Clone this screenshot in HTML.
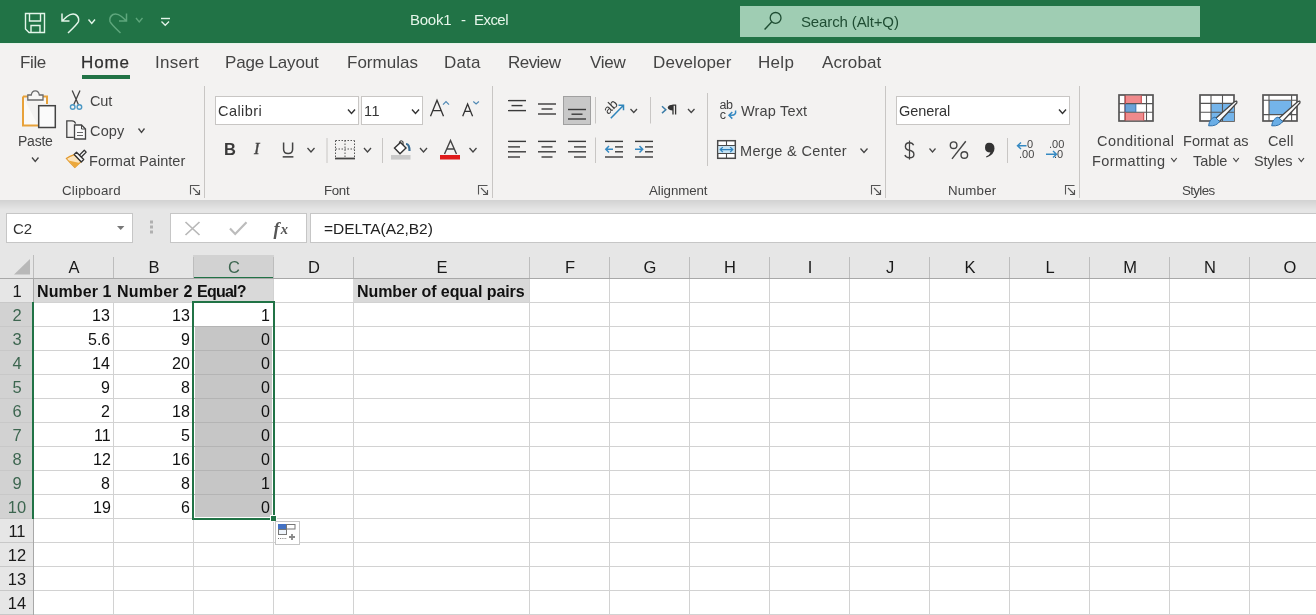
<!DOCTYPE html><html><head><meta charset="utf-8"><style>
*{box-sizing:border-box}
body{margin:0;width:1316px;height:615px;overflow:hidden;position:relative;background:#fff;font-family:"Liberation Sans",sans-serif;}
.a{position:absolute}
.t{position:absolute;white-space:nowrap;line-height:1;will-change:transform}
svg{position:absolute;overflow:visible;will-change:transform}
</style></head><body>
<div class="a" style="left:0px;top:0px;width:1316px;height:43px;background:#217346;"></div>
<div class="a" style="left:740px;top:6px;width:460px;height:31px;background:#9fcdb3;"></div>
<div class="t" style="left:410.15px;top:12.00px;font-size:15px;color:#e6f6ea;letter-spacing:-0.256px;">Book1</div>
<div class="t" style="left:461.38px;top:12.00px;font-size:15px;color:#e6f6ea;letter-spacing:0.000px;">-</div>
<div class="t" style="left:474.45px;top:12.00px;font-size:15px;color:#e6f6ea;letter-spacing:-0.550px;">Excel</div>
<div class="t" style="left:801.08px;top:14.00px;font-size:15px;color:#1f4d33;letter-spacing:-0.133px;">Search (Alt+Q)</div>
<div class="a" style="left:0px;top:43px;width:1316px;height:157px;background:#f3f2f1;"></div>
<div class="a" style="left:0px;top:43px;width:1316px;height:1px;background:#e6f3ea;"></div>
<div class="t" style="left:20.02px;top:54.00px;font-size:17px;color:#444;letter-spacing:-0.358px;">File</div>
<div class="t" style="left:81.22px;top:54.00px;font-size:17px;color:#303030;letter-spacing:0.883px;-webkit-text-stroke:0.25px #303030;">Home</div>
<div class="t" style="left:154.70px;top:54.00px;font-size:17px;color:#444;letter-spacing:0.265px;">Insert</div>
<div class="t" style="left:225.43px;top:54.00px;font-size:17px;color:#444;letter-spacing:-0.180px;">Page Layout</div>
<div class="t" style="left:346.62px;top:54.00px;font-size:17px;color:#444;letter-spacing:0.018px;">Formulas</div>
<div class="t" style="left:443.93px;top:54.00px;font-size:17px;color:#444;letter-spacing:0.158px;">Data</div>
<div class="t" style="left:507.82px;top:54.00px;font-size:17px;color:#444;letter-spacing:-0.540px;">Review</div>
<div class="t" style="left:589.88px;top:54.00px;font-size:17px;color:#444;letter-spacing:-0.267px;">View</div>
<div class="t" style="left:652.62px;top:54.00px;font-size:17px;color:#444;letter-spacing:0.103px;">Developer</div>
<div class="t" style="left:758.12px;top:54.00px;font-size:17px;color:#444;letter-spacing:0.308px;">Help</div>
<div class="t" style="left:822.40px;top:54.00px;font-size:17px;color:#444;letter-spacing:0.117px;">Acrobat</div>
<div class="a" style="left:82px;top:75px;width:48px;height:4px;background:#217346;"></div>
<div class="a" style="left:204px;top:86px;width:1px;height:112px;background:#c8c6c4;"></div>
<div class="a" style="left:492px;top:86px;width:1px;height:112px;background:#c8c6c4;"></div>
<div class="a" style="left:885px;top:86px;width:1px;height:112px;background:#c8c6c4;"></div>
<div class="a" style="left:1079px;top:86px;width:1px;height:112px;background:#c8c6c4;"></div>
<div class="t" style="left:62.00px;top:184.00px;font-size:13.3px;color:#444;letter-spacing:0.206px;">Clipboard</div>
<div class="t" style="left:324.30px;top:184.00px;font-size:13.3px;color:#444;letter-spacing:-0.325px;">Font</div>
<div class="t" style="left:649.02px;top:184.00px;font-size:13.3px;color:#444;letter-spacing:-0.072px;">Alignment</div>
<div class="t" style="left:947.60px;top:184.00px;font-size:13.3px;color:#444;letter-spacing:0.165px;">Number</div>
<div class="t" style="left:1181.60px;top:184.00px;font-size:13.3px;color:#444;letter-spacing:-0.620px;">Styles</div>
<div class="a" style="left:0px;top:200px;width:1316px;height:55px;background:#e6e6e6;"></div>
<div class="a" style="left:0px;top:200px;width:1316px;height:10px;background:linear-gradient(#d2d2d2,#e6e6e6);"></div>
<div class="a" style="left:6px;top:213px;width:127px;height:30px;background:#fff;border:1px solid #c6c6c6"></div>
<div class="t" style="left:13.05px;top:221.00px;font-size:15px;color:#333;letter-spacing:-0.150px;">C2</div>
<div class="a" style="left:170px;top:213px;width:137px;height:30px;background:#fff;border:1px solid #c6c6c6"></div>
<div class="a" style="left:310px;top:213px;width:1010px;height:30px;background:#fff;border:1px solid #c6c6c6"></div>
<div class="t" style="left:323.75px;top:221.00px;font-size:15.5px;color:#222;letter-spacing:-0.035px;">=DELTA(A2,B2)</div>
<div class="a" style="left:0px;top:255px;width:1316px;height:23px;background:#e6e6e6;"></div>
<div class="a" style="left:0px;top:255px;width:33px;height:360px;background:#e6e6e6;"></div>
<div class="a" style="left:193px;top:255px;width:81px;height:23px;background:#d2d2d2;"></div>
<div class="a" style="left:193px;top:277px;width:81px;height:2px;background:#217346;"></div>
<div class="a" style="left:0px;top:303px;width:32px;height:216px;background:#d2d2d2;"></div>
<div class="a" style="left:33px;top:279px;width:240px;height:23px;background:#d9d9d9;"></div>
<div class="a" style="left:353px;top:279px;width:176px;height:23px;background:#d9d9d9;"></div>
<div class="a" style="left:195px;top:327px;width:77px;height:190px;background:#c6c6c6;"></div>
<div class="a" style="left:33px;top:302px;width:1283px;height:1px;background:#d2d2d2"></div>
<div class="a" style="left:33px;top:326px;width:1283px;height:1px;background:#d2d2d2"></div>
<div class="a" style="left:33px;top:350px;width:1283px;height:1px;background:#d2d2d2"></div>
<div class="a" style="left:33px;top:374px;width:1283px;height:1px;background:#d2d2d2"></div>
<div class="a" style="left:33px;top:398px;width:1283px;height:1px;background:#d2d2d2"></div>
<div class="a" style="left:33px;top:422px;width:1283px;height:1px;background:#d2d2d2"></div>
<div class="a" style="left:33px;top:446px;width:1283px;height:1px;background:#d2d2d2"></div>
<div class="a" style="left:33px;top:470px;width:1283px;height:1px;background:#d2d2d2"></div>
<div class="a" style="left:33px;top:494px;width:1283px;height:1px;background:#d2d2d2"></div>
<div class="a" style="left:33px;top:518px;width:1283px;height:1px;background:#d2d2d2"></div>
<div class="a" style="left:33px;top:542px;width:1283px;height:1px;background:#d2d2d2"></div>
<div class="a" style="left:33px;top:566px;width:1283px;height:1px;background:#d2d2d2"></div>
<div class="a" style="left:33px;top:590px;width:1283px;height:1px;background:#d2d2d2"></div>
<div class="a" style="left:33px;top:614px;width:1283px;height:1px;background:#d2d2d2"></div>
<div class="a" style="left:113px;top:302px;width:1px;height:340px;background:#d2d2d2;"></div>
<div class="a" style="left:113px;top:257px;width:1px;height:21px;background:#bdbdbd;"></div>
<div class="t" style="left:-26.50px;width:200px;text-align:center;top:259.00px;font-size:16.5px;color:#1a1a1a;">A</div>
<div class="a" style="left:193px;top:302px;width:1px;height:340px;background:#d2d2d2;"></div>
<div class="a" style="left:193px;top:257px;width:1px;height:21px;background:#bdbdbd;"></div>
<div class="t" style="left:53.50px;width:200px;text-align:center;top:259.00px;font-size:16.5px;color:#1a1a1a;">B</div>
<div class="a" style="left:273px;top:279px;width:1px;height:340px;background:#d2d2d2;"></div>
<div class="a" style="left:273px;top:257px;width:1px;height:21px;background:#bdbdbd;"></div>
<div class="t" style="left:133.50px;width:200px;text-align:center;top:259.00px;font-size:16.5px;color:#3d6650;">C</div>
<div class="a" style="left:353px;top:302px;width:1px;height:340px;background:#d2d2d2;"></div>
<div class="a" style="left:353px;top:257px;width:1px;height:21px;background:#bdbdbd;"></div>
<div class="t" style="left:213.50px;width:200px;text-align:center;top:259.00px;font-size:16.5px;color:#1a1a1a;">D</div>
<div class="a" style="left:529px;top:279px;width:1px;height:340px;background:#d2d2d2;"></div>
<div class="a" style="left:529px;top:257px;width:1px;height:21px;background:#bdbdbd;"></div>
<div class="t" style="left:341.50px;width:200px;text-align:center;top:259.00px;font-size:16.5px;color:#1a1a1a;">E</div>
<div class="a" style="left:609px;top:279px;width:1px;height:340px;background:#d2d2d2;"></div>
<div class="a" style="left:609px;top:257px;width:1px;height:21px;background:#bdbdbd;"></div>
<div class="t" style="left:469.50px;width:200px;text-align:center;top:259.00px;font-size:16.5px;color:#1a1a1a;">F</div>
<div class="a" style="left:689px;top:279px;width:1px;height:340px;background:#d2d2d2;"></div>
<div class="a" style="left:689px;top:257px;width:1px;height:21px;background:#bdbdbd;"></div>
<div class="t" style="left:549.50px;width:200px;text-align:center;top:259.00px;font-size:16.5px;color:#1a1a1a;">G</div>
<div class="a" style="left:769px;top:279px;width:1px;height:340px;background:#d2d2d2;"></div>
<div class="a" style="left:769px;top:257px;width:1px;height:21px;background:#bdbdbd;"></div>
<div class="t" style="left:629.50px;width:200px;text-align:center;top:259.00px;font-size:16.5px;color:#1a1a1a;">H</div>
<div class="a" style="left:849px;top:279px;width:1px;height:340px;background:#d2d2d2;"></div>
<div class="a" style="left:849px;top:257px;width:1px;height:21px;background:#bdbdbd;"></div>
<div class="t" style="left:709.50px;width:200px;text-align:center;top:259.00px;font-size:16.5px;color:#1a1a1a;">I</div>
<div class="a" style="left:929px;top:279px;width:1px;height:340px;background:#d2d2d2;"></div>
<div class="a" style="left:929px;top:257px;width:1px;height:21px;background:#bdbdbd;"></div>
<div class="t" style="left:789.50px;width:200px;text-align:center;top:259.00px;font-size:16.5px;color:#1a1a1a;">J</div>
<div class="a" style="left:1009px;top:279px;width:1px;height:340px;background:#d2d2d2;"></div>
<div class="a" style="left:1009px;top:257px;width:1px;height:21px;background:#bdbdbd;"></div>
<div class="t" style="left:869.50px;width:200px;text-align:center;top:259.00px;font-size:16.5px;color:#1a1a1a;">K</div>
<div class="a" style="left:1089px;top:279px;width:1px;height:340px;background:#d2d2d2;"></div>
<div class="a" style="left:1089px;top:257px;width:1px;height:21px;background:#bdbdbd;"></div>
<div class="t" style="left:949.50px;width:200px;text-align:center;top:259.00px;font-size:16.5px;color:#1a1a1a;">L</div>
<div class="a" style="left:1169px;top:279px;width:1px;height:340px;background:#d2d2d2;"></div>
<div class="a" style="left:1169px;top:257px;width:1px;height:21px;background:#bdbdbd;"></div>
<div class="t" style="left:1029.50px;width:200px;text-align:center;top:259.00px;font-size:16.5px;color:#1a1a1a;">M</div>
<div class="a" style="left:1249px;top:279px;width:1px;height:340px;background:#d2d2d2;"></div>
<div class="a" style="left:1249px;top:257px;width:1px;height:21px;background:#bdbdbd;"></div>
<div class="t" style="left:1109.50px;width:200px;text-align:center;top:259.00px;font-size:16.5px;color:#1a1a1a;">N</div>
<div class="a" style="left:1329px;top:279px;width:1px;height:340px;background:#d2d2d2;"></div>
<div class="a" style="left:1329px;top:257px;width:1px;height:21px;background:#bdbdbd;"></div>
<div class="t" style="left:1189.50px;width:200px;text-align:center;top:259.00px;font-size:16.5px;color:#1a1a1a;">O</div>
<div class="a" style="left:33px;top:255px;width:1px;height:23px;background:#bdbdbd;"></div>
<div class="a" style="left:0px;top:278px;width:1316px;height:1px;background:#a8a8a8;"></div>
<div class="a" style="left:33px;top:278px;width:1px;height:340px;background:#a8a8a8;"></div>
<div class="a" style="left:0px;top:302px;width:33px;height:1px;background:#c8c8c8;"></div>
<div class="t" style="left:-83.00px;width:200px;text-align:center;top:283.00px;font-size:16.5px;color:#1a1a1a;">1</div>
<div class="a" style="left:0px;top:326px;width:33px;height:1px;background:#c8c8c8;"></div>
<div class="t" style="left:-83.00px;width:200px;text-align:center;top:307.00px;font-size:16.5px;color:#3d6650;">2</div>
<div class="a" style="left:0px;top:350px;width:33px;height:1px;background:#c8c8c8;"></div>
<div class="t" style="left:-83.00px;width:200px;text-align:center;top:331.00px;font-size:16.5px;color:#3d6650;">3</div>
<div class="a" style="left:0px;top:374px;width:33px;height:1px;background:#c8c8c8;"></div>
<div class="t" style="left:-83.00px;width:200px;text-align:center;top:355.00px;font-size:16.5px;color:#3d6650;">4</div>
<div class="a" style="left:0px;top:398px;width:33px;height:1px;background:#c8c8c8;"></div>
<div class="t" style="left:-83.00px;width:200px;text-align:center;top:379.00px;font-size:16.5px;color:#3d6650;">5</div>
<div class="a" style="left:0px;top:422px;width:33px;height:1px;background:#c8c8c8;"></div>
<div class="t" style="left:-83.00px;width:200px;text-align:center;top:403.00px;font-size:16.5px;color:#3d6650;">6</div>
<div class="a" style="left:0px;top:446px;width:33px;height:1px;background:#c8c8c8;"></div>
<div class="t" style="left:-83.00px;width:200px;text-align:center;top:427.00px;font-size:16.5px;color:#3d6650;">7</div>
<div class="a" style="left:0px;top:470px;width:33px;height:1px;background:#c8c8c8;"></div>
<div class="t" style="left:-83.00px;width:200px;text-align:center;top:451.00px;font-size:16.5px;color:#3d6650;">8</div>
<div class="a" style="left:0px;top:494px;width:33px;height:1px;background:#c8c8c8;"></div>
<div class="t" style="left:-83.00px;width:200px;text-align:center;top:475.00px;font-size:16.5px;color:#3d6650;">9</div>
<div class="a" style="left:0px;top:518px;width:33px;height:1px;background:#c8c8c8;"></div>
<div class="t" style="left:-83.00px;width:200px;text-align:center;top:499.00px;font-size:16.5px;color:#3d6650;">10</div>
<div class="a" style="left:0px;top:542px;width:33px;height:1px;background:#c8c8c8;"></div>
<div class="t" style="left:-83.00px;width:200px;text-align:center;top:523.00px;font-size:16.5px;color:#1a1a1a;">11</div>
<div class="a" style="left:0px;top:566px;width:33px;height:1px;background:#c8c8c8;"></div>
<div class="t" style="left:-83.00px;width:200px;text-align:center;top:547.00px;font-size:16.5px;color:#1a1a1a;">12</div>
<div class="a" style="left:0px;top:590px;width:33px;height:1px;background:#c8c8c8;"></div>
<div class="t" style="left:-83.00px;width:200px;text-align:center;top:571.00px;font-size:16.5px;color:#1a1a1a;">13</div>
<div class="a" style="left:0px;top:614px;width:33px;height:1px;background:#c8c8c8;"></div>
<div class="t" style="left:-83.00px;width:200px;text-align:center;top:595.00px;font-size:16.5px;color:#1a1a1a;">14</div>
<div class="a" style="left:32px;top:302px;width:2px;height:217px;background:#217346;"></div>
<svg style="left:0;top:255px" width="33" height="23"><path d="M30 4 L30 19.5 L14 19.5 Z" fill="#b8b8b8"/></svg>
<div class="t" style="left:36.75px;top:284.00px;font-size:16px;color:#111;font-weight:bold;letter-spacing:0.082px;">Number 1</div>
<div class="t" style="left:116.90px;top:284.00px;font-size:16px;color:#111;font-weight:bold;letter-spacing:0.211px;">Number 2</div>
<div class="t" style="left:196.80px;top:284.00px;font-size:16px;color:#111;font-weight:bold;letter-spacing:-0.780px;">Equal?</div>
<div class="t" style="left:357.00px;top:284.00px;font-size:16px;color:#111;font-weight:bold;letter-spacing:-0.062px;">Number of equal pairs</div>
<div class="t" style="left:92.38px;top:308.00px;font-size:16px;color:#111;letter-spacing:0.000px;">13</div>
<div class="t" style="left:172.38px;top:308.00px;font-size:16px;color:#111;letter-spacing:0.000px;">13</div>
<div class="t" style="left:261.38px;top:308.00px;font-size:16px;color:#111;letter-spacing:0.000px;">1</div>
<div class="t" style="left:87.88px;top:332.00px;font-size:16px;color:#111;letter-spacing:0.000px;">5.6</div>
<div class="t" style="left:181.38px;top:332.00px;font-size:16px;color:#111;letter-spacing:0.000px;">9</div>
<div class="t" style="left:261.25px;top:332.00px;font-size:16px;color:#111;letter-spacing:0.000px;">0</div>
<div class="t" style="left:92.12px;top:356.00px;font-size:16px;color:#111;letter-spacing:0.000px;">14</div>
<div class="t" style="left:172.38px;top:356.00px;font-size:16px;color:#111;letter-spacing:0.000px;">20</div>
<div class="t" style="left:261.25px;top:356.00px;font-size:16px;color:#111;letter-spacing:0.000px;">0</div>
<div class="t" style="left:101.38px;top:380.00px;font-size:16px;color:#111;letter-spacing:0.000px;">9</div>
<div class="t" style="left:181.25px;top:380.00px;font-size:16px;color:#111;letter-spacing:0.000px;">8</div>
<div class="t" style="left:261.25px;top:380.00px;font-size:16px;color:#111;letter-spacing:0.000px;">0</div>
<div class="t" style="left:101.38px;top:404.00px;font-size:16px;color:#111;letter-spacing:0.000px;">2</div>
<div class="t" style="left:172.38px;top:404.00px;font-size:16px;color:#111;letter-spacing:0.000px;">18</div>
<div class="t" style="left:261.25px;top:404.00px;font-size:16px;color:#111;letter-spacing:0.000px;">0</div>
<div class="t" style="left:93.62px;top:428.00px;font-size:16px;color:#111;letter-spacing:0.000px;">11</div>
<div class="t" style="left:181.25px;top:428.00px;font-size:16px;color:#111;letter-spacing:0.000px;">5</div>
<div class="t" style="left:261.25px;top:428.00px;font-size:16px;color:#111;letter-spacing:0.000px;">0</div>
<div class="t" style="left:92.50px;top:452.00px;font-size:16px;color:#111;letter-spacing:0.000px;">12</div>
<div class="t" style="left:172.38px;top:452.00px;font-size:16px;color:#111;letter-spacing:0.000px;">16</div>
<div class="t" style="left:261.25px;top:452.00px;font-size:16px;color:#111;letter-spacing:0.000px;">0</div>
<div class="t" style="left:101.25px;top:476.00px;font-size:16px;color:#111;letter-spacing:0.000px;">8</div>
<div class="t" style="left:181.25px;top:476.00px;font-size:16px;color:#111;letter-spacing:0.000px;">8</div>
<div class="t" style="left:261.38px;top:476.00px;font-size:16px;color:#111;letter-spacing:0.000px;">1</div>
<div class="t" style="left:92.50px;top:500.00px;font-size:16px;color:#111;letter-spacing:0.000px;">19</div>
<div class="t" style="left:181.25px;top:500.00px;font-size:16px;color:#111;letter-spacing:0.000px;">6</div>
<div class="t" style="left:261.25px;top:500.00px;font-size:16px;color:#111;letter-spacing:0.000px;">0</div>
<div class="a" style="left:194px;top:326px;width:79px;height:1px;background:#b4b4b4;"></div>
<div class="a" style="left:194px;top:350px;width:79px;height:1px;background:#b4b4b4;"></div>
<div class="a" style="left:194px;top:374px;width:79px;height:1px;background:#b4b4b4;"></div>
<div class="a" style="left:194px;top:398px;width:79px;height:1px;background:#b4b4b4;"></div>
<div class="a" style="left:194px;top:422px;width:79px;height:1px;background:#b4b4b4;"></div>
<div class="a" style="left:194px;top:446px;width:79px;height:1px;background:#b4b4b4;"></div>
<div class="a" style="left:194px;top:470px;width:79px;height:1px;background:#b4b4b4;"></div>
<div class="a" style="left:194px;top:494px;width:79px;height:1px;background:#b4b4b4;"></div>
<div class="a" style="left:192px;top:301px;width:83px;height:2px;background:#217346;"></div>
<div class="a" style="left:192px;top:518px;width:83px;height:2px;background:#217346;"></div>
<div class="a" style="left:192px;top:301px;width:2px;height:219px;background:#217346;"></div>
<div class="a" style="left:273px;top:301px;width:2px;height:219px;background:#217346;"></div>
<div class="a" style="left:270px;top:515px;width:7px;height:7px;background:#fff;"></div>
<div class="a" style="left:271px;top:516px;width:5px;height:5px;background:#217346;"></div>
<svg style="left:0;top:0" width="1316" height="260"><path d="M25.5 13.5 H44.5 V32.5 H29 L25.5 29 Z" fill="none" stroke="#e3f5e9" stroke-width="1.4"/><path d="M29.5 13.5 V21 H40.5 V13.5" fill="none" stroke="#e3f5e9" stroke-width="1.4"/><path d="M31 32.5 V25.5 H40 V32.5" fill="none" stroke="#e3f5e9" stroke-width="1.4"/><path d="M62 13.5 V21 H69.5 M62 21 L67 16.5 Q71.5 13 75.5 14.5 Q79.5 17 78.5 21.5 Q77.5 24 68 33" fill="none" stroke="#e3f5e9" stroke-width="1.5"/><path d="M88.5 19.5 L91.75 23.5 L95.0 19.5" fill="none" stroke="#e3f5e9" stroke-width="1.4"/><path d="M126.5 13.5 V21 H119 M126.5 21 L121.5 16.5 Q117 13 113 14.5 Q109 17 110 21.5 Q111 24 120.5 33" fill="none" stroke="#5ea67c" stroke-width="1.5"/><path d="M136 18 L139.25 22 L142.5 18" fill="none" stroke="#5ea67c" stroke-width="1.3"/><path d="M161 18.5 H170" stroke="#e3f5e9" stroke-width="1.4"/><path d="M161.5 21.5 L165.25 25.3 L169.0 21.5" fill="none" stroke="#e3f5e9" stroke-width="1.3"/><circle cx="775.6" cy="17.9" r="5.4" fill="none" stroke="#1f4d33" stroke-width="1.3"/><path d="M771.6 21.9 L764.6 29.4" stroke="#1f4d33" stroke-width="1.4"/><path d="M23 96.5 H47 V104 M38 125.5 H23 V96.5" fill="#fbfaf8" stroke="#e8a23a" stroke-width="2"/><path d="M27.8 100 V95 H31.3 Q31.8 90.8 35.3 90.8 Q38.8 90.8 39.3 95 H43 V100 Z" fill="#f7f6f4" stroke="#6a6a6a" stroke-width="1.3"/><rect x="38.7" y="105.7" width="16.6" height="21.8" fill="#fafafa" stroke="#444" stroke-width="1.5"/><path d="M32 157.5 L35.25 161.5 L38.5 157.5" fill="none" stroke="#444" stroke-width="1.3"/><path d="M72.2 90.5 L78.5 104.8 M80 90.5 L73.7 104.8" stroke="#444" stroke-width="1.3" fill="none"/><circle cx="72.7" cy="107" r="2.3" fill="none" stroke="#4b98c4" stroke-width="1.4"/><circle cx="79.4" cy="107" r="2.3" fill="none" stroke="#4b98c4" stroke-width="1.4"/><path d="M73.8 137.3 H66.8 V120.8 H72 Q74.6 120.8 75.6 123.6" fill="none" stroke="#444" stroke-width="1.3"/><path d="M74.5 125 H81.5 L85.5 129 V139 H74.5 Z" fill="#fafafa" stroke="#444" stroke-width="1.3"/><path d="M81.5 125 V129 H85.5" fill="none" stroke="#444" stroke-width="1"/><path d="M77 132.5 H83 M77 135.5 H83" stroke="#666" stroke-width="1"/><path d="M138.5 128.5 L141.5 132.5 L144.5 128.5" fill="none" stroke="#444" stroke-width="1.3"/><path d="M74.3 154.6 Q69.5 156 66.3 158.5 Q70 163 74.9 167.5 L81.2 161.6 Z" fill="#fbe4bd" stroke="#e39a2d" stroke-width="1.1"/><path d="M68.3 160.6 L74.9 167.5 L79.8 162.9 Z" fill="#eba83c"/><path d="M78.9 155.6 L84.3 150.2 L86.2 152.1 L80.8 157.5 Z" fill="#fafafa" stroke="#333" stroke-width="1.3" stroke-linejoin="round"/><path d="M74.2 154.4 L76.5 152.2 L83.7 159.6 L81.3 161.9 Z" fill="#fafafa" stroke="#333" stroke-width="1.4" stroke-linejoin="round"/><path d="M190.5 194.5 V185.5 H199.5 M193 188 L199.5 194.5 M199.5 190 V194.5 H195" fill="none" stroke="#555" stroke-width="1.1"/><path d="M478.5 194.5 V185.5 H487.5 M481 188 L487.5 194.5 M487.5 190 V194.5 H483" fill="none" stroke="#555" stroke-width="1.1"/><path d="M871.5 194.5 V185.5 H880.5 M874 188 L880.5 194.5 M880.5 190 V194.5 H876" fill="none" stroke="#555" stroke-width="1.1"/><path d="M1065.5 194.5 V185.5 H1074.5 M1068 188 L1074.5 194.5 M1074.5 190 V194.5 H1070" fill="none" stroke="#555" stroke-width="1.1"/><rect x="215.5" y="96.5" width="143" height="28" fill="#fff" stroke="#c8c6c4"/><rect x="361.5" y="96.5" width="61" height="28" fill="#fff" stroke="#c8c6c4"/><path d="M348 109.5 L351.5 113.5 L355 109.5" fill="none" stroke="#333" stroke-width="1.4"/><path d="M412 109.5 L415.5 113.5 L419 109.5" fill="none" stroke="#333" stroke-width="1.4"/><path d="M430.5 116.3 L437 100.3 L443.5 116.3 M432.8 110.6 H441.2" fill="none" stroke="#333" stroke-width="1.3"/><path d="M443 104.6 L446 101.5 L449 104.6" fill="none" stroke="#4f88b3" stroke-width="1.2"/><path d="M462.7 116.3 L467.6 104 L472.6 116.3 M464.5 111.3 H470.7" fill="none" stroke="#333" stroke-width="1.3"/><path d="M473.3 101.5 L476.1 103.9 L478.9 101.5" fill="none" stroke="#4f88b3" stroke-width="1.2"/><path d="M307.5 148 L311.0 152 L314.5 148" fill="none" stroke="#444" stroke-width="1.3"/><path d="M327 138 V163 M382.5 138 V163" stroke="#c8c6c4" stroke-width="1"/><path d="M335.5 140.5 H354.5 M335.5 140.5 V157 M354.5 140.5 V157 M345 140.5 V157 M335.5 149 H354.5" fill="none" stroke="#555" stroke-width="1" stroke-dasharray="1.5 1.5"/><path d="M335 158.5 H355" stroke="#444" stroke-width="1.8"/><path d="M364 148 L367.5 152 L371 148" fill="none" stroke="#444" stroke-width="1.3"/><path d="M399.5 146 L399.5 142 Q401.5 139.5 403 142 L403 146" fill="none" stroke="#444" stroke-width="1.2"/><path d="M394.5 148 L400.5 142.5 L406 148 L400 153.8 Z" fill="#fff" stroke="#333" stroke-width="1.4"/><path d="M406 144 Q409.5 144 409.5 151" fill="none" stroke="#3a6e94" stroke-width="2.2"/><rect x="391" y="155" width="19.5" height="4.6" fill="#c9c9c9"/><path d="M420 148 L423.5 152 L427 148" fill="none" stroke="#444" stroke-width="1.3"/><path d="M444.5 154 L450.5 140.5 L456.5 154 M446.8 149 H454.2" fill="none" stroke="#444" stroke-width="1.4"/><rect x="440" y="155" width="20" height="4.5" fill="#e01b1b"/><path d="M469.5 148 L473.0 152 L476.5 148" fill="none" stroke="#444" stroke-width="1.3"/><rect x="563.5" y="96.5" width="27" height="28" fill="#c8c8c8" stroke="#a0a0a0"/><path d="M508 100.6 H526" stroke="#3a3a3a" stroke-width="1.4"/><path d="M511.5 105.6 H522.5" stroke="#3a3a3a" stroke-width="1.4"/><path d="M508 110.6 H526" stroke="#3a3a3a" stroke-width="1.4"/><path d="M538 104 H556" stroke="#3a3a3a" stroke-width="1.4"/><path d="M541.5 109 H552.5" stroke="#3a3a3a" stroke-width="1.4"/><path d="M538 114 H556" stroke="#3a3a3a" stroke-width="1.4"/><path d="M568 109.5 H586" stroke="#3a3a3a" stroke-width="1.4"/><path d="M571.5 114.2 H582.5" stroke="#3a3a3a" stroke-width="1.4"/><path d="M568 119 H586" stroke="#3a3a3a" stroke-width="1.4"/><path d="M595.5 97 V123.5 M650.5 97 V123.5 M595.5 137.5 V163 M707.5 93 V166" stroke="#c8c6c4" stroke-width="1"/><text x="0" y="0" transform="translate(608.3,114.9) rotate(-45)" font-family="Liberation Sans" font-size="13" fill="#3a3a3a">ab</text><path d="M610.8 118.2 L623.3 105.4 M618.5 105.2 H623.5 V110.2" fill="none" stroke="#2f85bb" stroke-width="1.5"/><path d="M630.5 109 L633.75 112.5 L637.0 109" fill="none" stroke="#444" stroke-width="1.3"/><path d="M662 106.3 L665.8 109.7 L662 113.1" fill="none" stroke="#3d7ea8" stroke-width="1.5"/><path d="M672.6 105.2 H676.2 M673 105 V114.6 M675.6 105 V114.6" fill="none" stroke="#333" stroke-width="1.3"/><path d="M673 104.7 Q667.8 104.8 667.8 107.6 Q667.8 110.4 673 110.4 Z" fill="#333"/><path d="M688 109 L691.25 112.5 L694.5 109" fill="none" stroke="#444" stroke-width="1.3"/><path d="M508 141.4 H526" stroke="#3a3a3a" stroke-width="1.4"/><path d="M508 146.9 H520" stroke="#3a3a3a" stroke-width="1.4"/><path d="M508 151.8 H526" stroke="#3a3a3a" stroke-width="1.4"/><path d="M508 157 H520" stroke="#3a3a3a" stroke-width="1.4"/><path d="M538 141.4 H556" stroke="#3a3a3a" stroke-width="1.4"/><path d="M541.5 146.9 H552.5" stroke="#3a3a3a" stroke-width="1.4"/><path d="M538 151.8 H556" stroke="#3a3a3a" stroke-width="1.4"/><path d="M541.5 157 H552.5" stroke="#3a3a3a" stroke-width="1.4"/><path d="M568 141.4 H586" stroke="#3a3a3a" stroke-width="1.4"/><path d="M574 146.9 H586" stroke="#3a3a3a" stroke-width="1.4"/><path d="M568 151.8 H586" stroke="#3a3a3a" stroke-width="1.4"/><path d="M574 157 H586" stroke="#3a3a3a" stroke-width="1.4"/><path d="M605 141.4 H623" stroke="#3a3a3a" stroke-width="1.4"/><path d="M615 146.9 H623" stroke="#3a3a3a" stroke-width="1.4"/><path d="M615 151.8 H623" stroke="#3a3a3a" stroke-width="1.4"/><path d="M605 157 H623" stroke="#3a3a3a" stroke-width="1.4"/><path d="M613 149.3 H606 M609 146 L605.8 149.3 L609 152.6" fill="none" stroke="#3589c2" stroke-width="1.5"/><path d="M635 141.4 H653" stroke="#3a3a3a" stroke-width="1.4"/><path d="M645 146.9 H653" stroke="#3a3a3a" stroke-width="1.4"/><path d="M645 151.8 H653" stroke="#3a3a3a" stroke-width="1.4"/><path d="M635 157 H653" stroke="#3a3a3a" stroke-width="1.4"/><path d="M635 149.3 H642.5 M639.5 146 L642.7 149.3 L639.5 152.6" fill="none" stroke="#3589c2" stroke-width="1.5"/><text x="719.5" y="109" font-family="Liberation Sans" font-size="12.5" fill="#404040" letter-spacing="-0.4">ab</text><text x="719.8" y="118.5" font-family="Liberation Sans" font-size="12.5" fill="#404040">c</text><path d="M735.5 110.5 Q736.5 115 731.5 115.3 H729.5 M732.3 112 L729 115.3 L732.3 118.6" fill="none" stroke="#3589c2" stroke-width="1.5"/><rect x="717.7" y="140.7" width="17.6" height="17.6" fill="#fff" stroke="#4a4a4a" stroke-width="1.5"/><rect x="718.5" y="146" width="16" height="7.2" fill="#c6e3f4"/><path d="M718 145.5 H735 M718 153.5 H735 M726.5 141 V145.5 M726.5 153.5 V158" stroke="#4a4a4a" stroke-width="1.1"/><path d="M720.3 149.6 H732.7 M722.8 147.1 L720.3 149.6 L722.8 152.1 M730.2 147.1 L732.7 149.6 L730.2 152.1" fill="none" stroke="#2f82bd" stroke-width="1.3"/><path d="M860.5 148.5 L864.0 152.5 L867.5 148.5" fill="none" stroke="#444" stroke-width="1.3"/><rect x="896.5" y="96.5" width="173" height="28" fill="#fff" stroke="#c8c6c4"/><path d="M1059 109.5 L1062.5 113.5 L1066 109.5" fill="none" stroke="#333" stroke-width="1.4"/><path d="M929.5 148.5 L932.5 152.0 L935.5 148.5" fill="none" stroke="#444" stroke-width="1.2"/><path d="M1007.5 138 V163" stroke="#c8c6c4" stroke-width="1"/><path d="M1026.5 145.8 H1018 M1021 142.5 L1017.5 145.8 L1021 149" fill="none" stroke="#3589c2" stroke-width="1.4"/><path d="M1046 154.3 H1056 M1053 151 L1056.5 154.3 L1053 157.6" fill="none" stroke="#3589c2" stroke-width="1.4"/><rect x="1119" y="95" width="34" height="26" fill="#fff" stroke="#555" stroke-width="1.7"/><rect x="1125" y="95.6" width="16.3" height="8" fill="#f08a8c"/><rect x="1125" y="112.4" width="18.7" height="8" fill="#f08a8c"/><rect x="1125" y="103.9" width="10.8" height="8.3" fill="#6aa3d8"/><path d="M1125 95 V121 M1146.5 95 V121 M1119 103.6 H1153 M1119 112.3 H1153" stroke="#555" stroke-width="1.1" fill="none"/><path d="M1125.3 95.5 V120.5 M1141.3 95.5 V103.5 M1143.7 112.5 V120.5" stroke="#c9494c" stroke-width="1.1" fill="none"/><path d="M1125.3 104 V112 M1135.8 104 V112" stroke="#3d78b5" stroke-width="1.1" fill="none"/><rect x="1200" y="95" width="34" height="26" fill="#fff" stroke="#555" stroke-width="1.7"/><rect x="1211" y="103.5" width="23" height="17.5" fill="#74b4ea"/><path d="M1211 95 V121 M1222.5 95 V121 M1200 103.4 H1234 M1200 112.3 H1234" stroke="#555" stroke-width="1.1" fill="none"/><path d="M1215.5 118.5 L1234.5 101.8 Q1237.5 100 1236.8 103 L1219.2 121.8 Z" fill="#fafafa" stroke="#444" stroke-width="1.3"/><path d="M1208.6 125.8 Q1209.5 118.5 1215 117 L1219.5 121.5 Q1216.5 126.5 1208.6 125.8 Z" fill="#6aaee6" stroke="#2f6fa8" stroke-width="1"/><rect x="1263" y="95" width="34" height="26" fill="#fff" stroke="#555" stroke-width="1.7"/><rect x="1269" y="100.5" width="22.6" height="14" fill="#74b4ea"/><path d="M1269 95 V121 M1291.6 95 V121 M1263 100.3 H1297 M1263 114.6 H1297" stroke="#555" stroke-width="1.1" fill="none"/><path d="M1278.6 118.5 L1297.6 101.8 Q1300.6 100 1299.9 103 L1282.3 121.8 Z" fill="#fafafa" stroke="#444" stroke-width="1.3"/><path d="M1271.7 125.8 Q1272.6 118.5 1278.1 117 L1282.6 121.5 Q1279.6 126.5 1271.7 125.8 Z" fill="#6aaee6" stroke="#2f6fa8" stroke-width="1"/><path d="M1171.2 158 L1173.95 161.5 L1176.7 158" fill="none" stroke="#444" stroke-width="1.2"/><path d="M1233.3 158 L1236.05 161.5 L1238.8 158" fill="none" stroke="#444" stroke-width="1.2"/><path d="M1298.5 158 L1301.25 161.5 L1304.0 158" fill="none" stroke="#444" stroke-width="1.2"/><path d="M146 197 " /><rect x="150" y="220.5" width="3" height="3" fill="#b0b0b0"/><rect x="150" y="225.5" width="3" height="3" fill="#b0b0b0"/><rect x="150" y="230.5" width="3" height="3" fill="#b0b0b0"/><path d="M117 226 L120.7 230 L124.4 226 Z" fill="#777"/><path d="M185.5 222 L199.5 235 M199.5 222 L185.5 235" stroke="#b8b8b8" stroke-width="1.7"/><path d="M230 228.5 L235.2 234 L246.5 222.3" fill="none" stroke="#bcbcbc" stroke-width="2.2"/><text x="273.5" y="234.5" font-family="Liberation Serif" font-style="italic" font-weight="bold" font-size="18" fill="#555">f</text><text x="280.8" y="234" font-family="Liberation Serif" font-style="italic" font-weight="bold" font-size="14.5" fill="#555">x</text><path d="M989 142.8 Q994.5 142.8 994.5 148.5 Q994.5 154.5 986.5 157.5 L986 156.5 Q990 154.5 990.5 152.5 Q985 152.5 985 147.8 Q985 142.8 989 142.8 Z" fill="#333"/></svg>
<div class="t" style="left:18.18px;top:134.00px;font-size:14px;color:#444;letter-spacing:-0.225px;">Paste</div>
<div class="t" style="left:89.65px;top:94.00px;font-size:14.5px;color:#444;letter-spacing:-0.113px;">Cut</div>
<div class="t" style="left:89.65px;top:124.00px;font-size:14.5px;color:#444;letter-spacing:0.158px;">Copy</div>
<div class="t" style="left:89.28px;top:154.00px;font-size:14.5px;color:#444;letter-spacing:0.029px;">Format Painter</div>
<div class="t" style="left:217.75px;top:104.00px;font-size:14.5px;color:#333;letter-spacing:0.454px;">Calibri</div>
<div class="t" style="left:364.18px;top:104.00px;font-size:14.5px;color:#333;letter-spacing:0.450px;">11</div>
<div class="t" style="left:223.68px;top:141.00px;font-size:16.5px;color:#3a3a3a;font-weight:bold;letter-spacing:0.000px;">B</div>
<div class="t" style="left:254.00px;top:141.00px;font-size:16.5px;color:#444;font-family:'Liberation Serif';font-style:italic;-webkit-text-stroke:0.4px #444;">I</div>
<svg style="left:0;top:0" width="400" height="200"><path d="M283.6 142.6 V149.3 Q283.6 153.6 288.1 153.6 Q292.6 153.6 292.6 149.3 V142.6" fill="none" stroke="#444" stroke-width="1.5"/><rect x="282.7" y="156" width="10.7" height="1.7" fill="#555"/></svg>
<div class="t" style="left:741.48px;top:104.00px;font-size:14.5px;color:#444;letter-spacing:0.175px;">Wrap Text</div>
<div class="t" style="left:740.48px;top:144.00px;font-size:14.5px;color:#444;letter-spacing:0.331px;">Merge &amp; Center</div>
<div class="t" style="left:898.85px;top:104.00px;font-size:14.5px;color:#333;letter-spacing:-0.079px;">General</div>
<svg style="left:0;top:0" width="1100" height="200"><path d="M909.5 140.6 V159.6" stroke="#444" stroke-width="1.2"/><path d="M913.6 145.3 Q912.6 142.8 909.5 142.8 Q905.4 142.8 905.4 146.4 Q905.4 149.6 909.5 150.3 Q913.9 151.1 913.9 154.4 Q913.9 157.7 909.5 157.7 Q905.9 157.7 904.9 155" fill="none" stroke="#444" stroke-width="1.4"/><circle cx="953.6" cy="145.2" r="3.3" fill="none" stroke="#444" stroke-width="1.4"/><circle cx="964.3" cy="155" r="3.3" fill="none" stroke="#444" stroke-width="1.4"/><path d="M965.8 141.3 L952 158.9" stroke="#444" stroke-width="1.4"/></svg>
<div class="t" style="left:1026.50px;top:139.00px;font-size:11px;color:#444;">0</div>
<div class="t" style="left:1018.50px;top:149.00px;font-size:11px;color:#444;">.00</div>
<div class="t" style="left:1049.00px;top:139.00px;font-size:11px;color:#444;">.00</div>
<div class="t" style="left:1054.00px;top:149.00px;font-size:11px;color:#444;">.0</div>
<div class="t" style="left:1096.55px;top:134.00px;font-size:14.5px;color:#444;letter-spacing:0.453px;">Conditional</div>
<div class="t" style="left:1091.78px;top:154.00px;font-size:14.5px;color:#444;letter-spacing:0.428px;">Formatting</div>
<div class="t" style="left:1183.47px;top:134.00px;font-size:14.5px;color:#444;letter-spacing:0.034px;">Format as</div>
<div class="t" style="left:1192.53px;top:154.00px;font-size:14.5px;color:#444;letter-spacing:-0.081px;">Table</div>
<div class="t" style="left:1267.55px;top:134.00px;font-size:14.5px;color:#444;letter-spacing:0.150px;">Cell</div>
<div class="t" style="left:1253.67px;top:154.00px;font-size:14.5px;color:#444;letter-spacing:-0.195px;">Styles</div>
<svg style="left:0;top:0" width="1316" height="615"><rect x="275.5" y="521.5" width="24" height="23" fill="#fff" stroke="#c6c6c6"/><rect x="278" y="524" width="8.5" height="5" fill="#4472c4"/><rect x="286.5" y="524.5" width="8.5" height="4.5" fill="#fff" stroke="#777" stroke-width="1"/><rect x="278.5" y="529.5" width="8" height="5" fill="#eef4fb" stroke="#777" stroke-width="1"/><path d="M278 538.5 H287" stroke="#777" stroke-width="1" stroke-dasharray="1 1.2"/><path d="M292 534 V540 M289 537 H295" stroke="#888" stroke-width="1.8"/></svg>
</body></html>
